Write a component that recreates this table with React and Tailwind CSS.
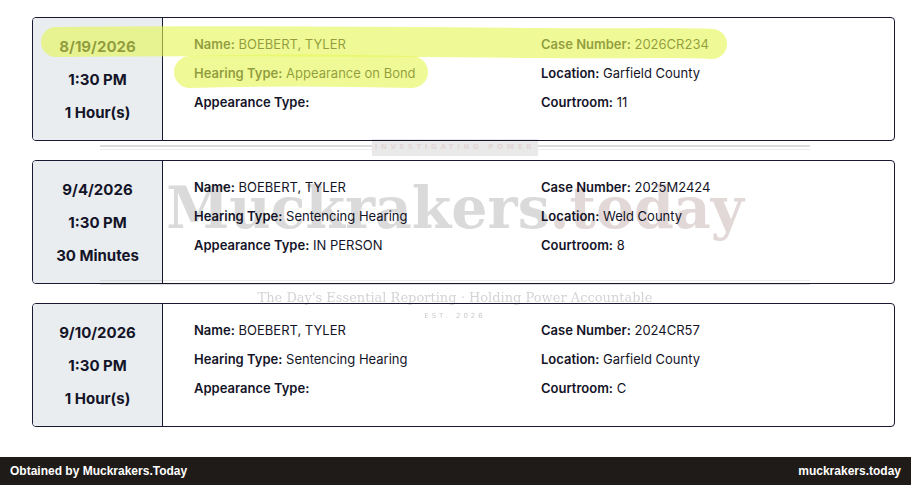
import React from "react";

const cards = [
  {
    date: "8/19/2026",
    time: "1:30 PM",
    dur: "1 Hour(s)",
    name: "BOEBERT, TYLER",
    hearing: "Appearance on Bond",
    appearance: "",
    caseNo: "2026CR234",
    location: "Garfield County",
    courtroom: "11",
  },
  {
    date: "9/4/2026",
    time: "1:30 PM",
    dur: "30 Minutes",
    name: "BOEBERT, TYLER",
    hearing: "Sentencing Hearing",
    appearance: "IN PERSON",
    caseNo: "2025M2424",
    location: "Weld County",
    courtroom: "8",
  },
  {
    date: "9/10/2026",
    time: "1:30 PM",
    dur: "1 Hour(s)",
    name: "BOEBERT, TYLER",
    hearing: "Sentencing Hearing",
    appearance: "",
    caseNo: "2024CR57",
    location: "Garfield County",
    courtroom: "C",
  },
];

function Field({ label, value }) {
  return (
    <div className="leading-[29px] whitespace-nowrap">
      <span className="font-semibold">{label}:</span>
      {value ? <span> {value}</span> : null}
    </div>
  );
}

function Card({ c }) {
  return (
    <div className="flex h-[124px] border border-[#1b1833] rounded-[4px] overflow-hidden bg-white">
      <div className="w-[130px] shrink-0 bg-[#e9edef] border-r border-[#1b1833] flex flex-col items-center pt-[12px] text-[15px] font-bold text-[#141428] leading-[33px]">
        <div>{c.date}</div>
        <div>{c.time}</div>
        <div>{c.dur}</div>
      </div>
      <div className="flex-1 flex pt-[12px] pl-[31px] text-[13px] text-[#141428]">
        <div className="w-[347px] flex flex-col">
          <Field label="Name" value={c.name} />
          <Field label="Hearing Type" value={c.hearing} />
          <Field label="Appearance Type" value={c.appearance} />
        </div>
        <div className="flex flex-col">
          <Field label="Case Number" value={c.caseNo} />
          <Field label="Location" value={c.location} />
          <Field label="Courtroom" value={c.courtroom} />
        </div>
      </div>
    </div>
  );
}

export default function App() {
  return (
    <div
      className="relative w-[911px] h-[485px] bg-white overflow-hidden flex flex-col"
      style={{ fontFamily: "Inter, 'Liberation Sans', sans-serif" }}
    >
      <div className="flex flex-col gap-[19px] pt-[17px] pl-[32px] pr-[16px]">
        {cards.map((c, i) => (
          <Card key={i} c={c} />
        ))}
      </div>

      <footer
        className="mt-auto h-[28px] bg-[#1f1b18] flex items-center justify-between px-[10px] text-white text-[12px] font-bold"
        style={{ fontFamily: "'Liberation Sans', Arial, sans-serif" }}
      >
        <span>Obtained by Muckrakers.Today</span>
        <span>muckrakers.today</span>
      </footer>

      {/* Watermark overlay */}
      <div className="pointer-events-none absolute left-[100px] top-[139px] w-[710px] flex flex-col items-center mix-blend-multiply">
        <div className="relative w-full h-[17px]">
          <div className="absolute left-0 right-0 top-[6px] h-[2px] bg-[#dcdcdc]" />
          <div className="absolute left-0 right-0 top-[10px] h-[1px] bg-[#ececec]" />
          <div className="absolute left-[272px] w-[166px] top-0 h-[17px] bg-[#e9e9e9] flex items-center justify-center">
            <span
              className="text-[7px] font-bold tracking-[3.6px] whitespace-nowrap text-[#e2d6d6]"
              style={{ fontFamily: "'DejaVu Sans', sans-serif" }}
            >
              INVESTIGATING POWER
            </span>
          </div>
        </div>
        <div
          className="mt-[19px] text-[57px] leading-[66px] font-bold whitespace-nowrap"
          style={{ fontFamily: "'DejaVu Serif', serif" }}
        >
          <span className="text-[#dadada]">Muckrakers</span>
          <span className="text-[#e2d8d8]">.today</span>
        </div>
        <div className="relative w-full h-[7px] mt-[39px]">
          <div className="absolute left-0 right-0 top-0 h-[1px] bg-[#ebebeb]" />
          <div className="absolute left-0 right-0 top-[3px] h-[2px] bg-[#dedede]" />
        </div>
        <div
          className="mt-[3px] text-[13px] leading-[16px] text-[#d4d4d4] whitespace-nowrap"
          style={{ fontFamily: "'DejaVu Serif', serif" }}
        >
          The Day's Essential Reporting  ·  Holding Power Accountable
        </div>
        <div
          className="mt-[5px] text-[7px] tracking-[3px] text-[#c9c9c9]"
          style={{ fontFamily: "'DejaVu Sans', sans-serif" }}
        >
          EST. 2026
        </div>
      </div>

      {/* Highlighter strokes */}
      <svg
        className="pointer-events-none absolute left-0 top-0"
        width="911"
        height="485"
        viewBox="0 0 911 485"
      >
        <g fill="none" stroke="rgb(228,246,80)" strokeOpacity="0.6" strokeLinecap="round" strokeLinejoin="round">
          <path d="M56 42 C 200 40, 400 42, 540 43 C 620 44, 680 42, 712 44" strokeWidth="30" />
          <path d="M190 72 C 260 70, 340 70, 412 72" strokeWidth="32" />
        </g>
      </svg>
    </div>
  );
}
